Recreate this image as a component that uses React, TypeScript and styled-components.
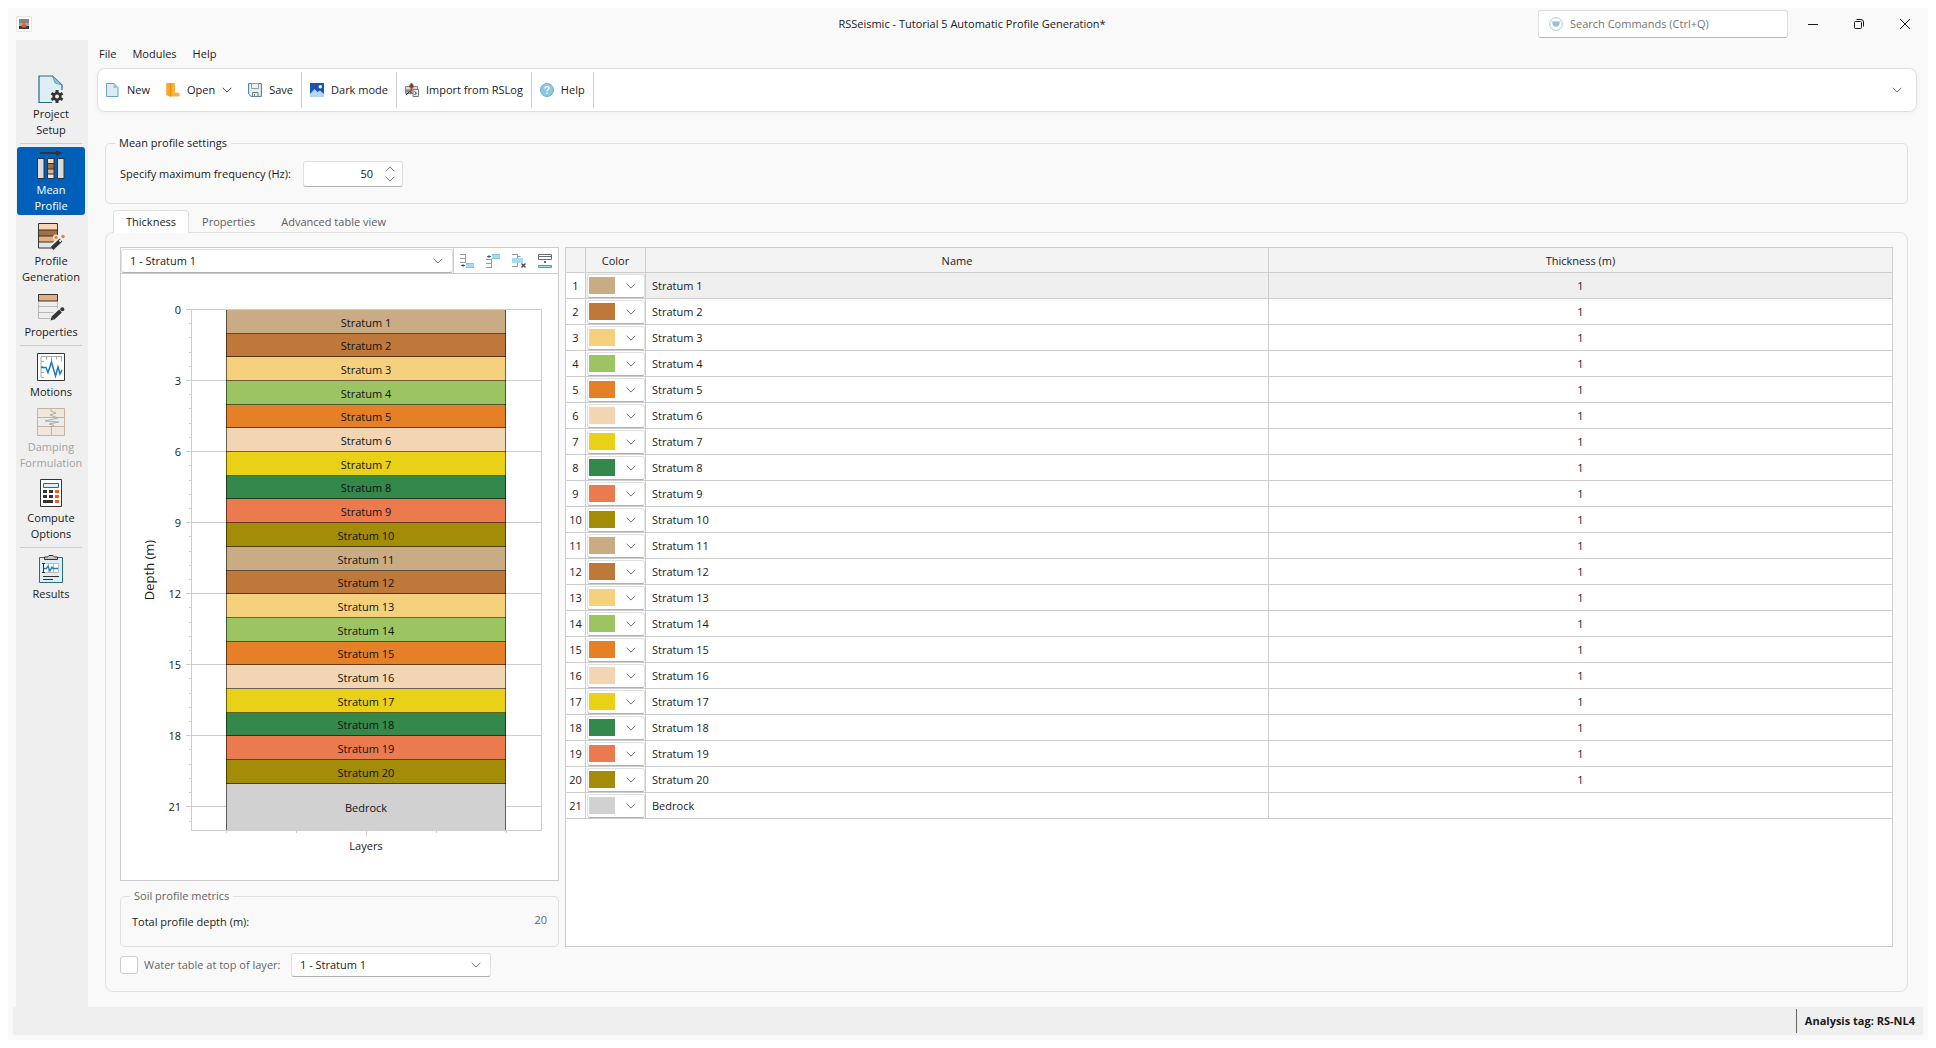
import React, { useState } from "react";
import styled, { createGlobalStyle, css } from "styled-components";

const font = `"Segoe UI", "Open Sans", "Noto Sans", sans-serif`;
const line = "#cdcdcd";
const softLine = "#e0e0e0";

const GlobalStyle = createGlobalStyle`
  *, *::before, *::after { box-sizing: border-box; }
  body { margin: 0; background: #fff; color: #1a1a1a; font: 11px/16px ${font}; }
  button, input, select { font: inherit; color: inherit; }
  button { margin: 0; padding: 0; border: 0; background: none; cursor: pointer; }
`;

/* ---------- window frame ---------- */

const Window = styled.div`
  display: flex;
  flex-direction: column;
  min-height: calc(100vh - 16px);
  margin: 8px;
  background: #f9f9f9;
`;

const TitleBar = styled.header`
  display: grid;
  grid-template-columns: 1fr auto 1fr;
  align-items: center;
  height: 32px;
  padding-left: 8px;
`;

const Title = styled.h1`
  margin: 0;
  font: inherit;
`;

const TitleTools = styled.div`
  display: flex;
  justify-content: flex-end;
  align-items: center;
`;

const SearchBox = styled.label`
  display: flex;
  align-items: center;
  gap: 7px;
  width: 250px;
  height: 28px;
  margin-right: 2px;
  padding: 0 10px;
  background: #fff;
  border: 1px solid ${softLine};
  border-bottom-color: #b8b8b8;
  border-radius: 3px;
  input {
    flex: 1;
    min-width: 0;
    padding: 0;
    border: 0;
    outline: 0;
    background: none;
  }
  input::placeholder { color: #757575; opacity: 1; }
`;

const WindowButton = styled.button`
  display: grid;
  place-items: center;
  width: 46px;
  height: 32px;
`;

const Body = styled.div`
  display: flex;
  flex: 1;
  padding-left: 8px;
`;

const StatusBar = styled.footer`
  display: flex;
  justify-content: flex-end;
  align-items: center;
  height: 28px;
  margin: 0 5px 5px;
  background: #efefef;
`;

const StatusTag = styled.strong`
  padding: 4px 8px 4px 8px;
  border-left: 1px solid #666;
`;

/* ---------- sidebar ---------- */

const Sidebar = styled.nav`
  display: flex;
  flex-direction: column;
  gap: 3px;
  flex: none;
  width: 72px;
  padding: 31px 3px 0 1px;
  background: #efefef;
`;

const NavButton = styled.button<{ $active?: boolean }>`
  display: flex;
  flex-direction: column;
  align-items: center;
  gap: 3px;
  padding: 4px 0 1px;
  border-radius: 3px;
  line-height: 16px;
  svg { display: block; }
  ${(p) => p.$active && css`background: #005fb8; color: #fff;`}
  &:disabled { color: #a3a3a3; cursor: default; }
`;

const NavLine = styled.hr`
  width: 62px;
  height: 1px;
  margin: 1px 3px 0;
  border: 0;
  background: ${line};
`;

/* ---------- main column ---------- */

const Main = styled.main`
  display: flex;
  flex-direction: column;
  flex: 1;
  min-width: 0;
`;

const MenuBar = styled.nav`
  display: flex;
  height: 28px;
  padding-left: 3px;
  button { padding: 0 8px; }
`;

const Toolbar = styled.div`
  display: flex;
  align-items: center;
  height: 44px;
  margin: 0 11px 0 9px;
  background: #fff;
  border: 1px solid ${softLine};
  border-radius: 8px;
  box-shadow: 0 1px 4px rgba(0, 0, 0, 0.05);
`;

const ToolGroup = styled.div`
  display: flex;
  align-items: center;
  height: 36px;
  border-right: 1px solid ${line};
`;

const ToolButton = styled.button`
  display: flex;
  align-items: center;
  gap: 7px;
  height: 100%;
  padding: 0 8px;
`;

const Overflow = styled.button`
  display: grid;
  margin: 0 14px 0 auto;
`;

const Content = styled.div`
  display: flex;
  flex-direction: column;
  flex: 1;
  padding: 23px 20px 15px 17px;
`;

const Group = styled.fieldset`
  min-width: 0;
  margin: 0;
  padding: 10px 9px 16px;
  border: 1px solid ${softLine};
  border-radius: 5px;
`;

const Legend = styled.legend<{ $muted?: boolean }>`
  padding: 0 4px;
  color: ${(p) => (p.$muted ? "#666" : "inherit")};
`;

const SettingRow = styled.div`
  display: flex;
  align-items: center;
  gap: 7px;
  padding-left: 5px;
  label { min-width: 176px; }
`;

const Spin = styled.div`
  display: flex;
  align-items: center;
  width: 100px;
  height: 26px;
  padding-right: 7px;
  background: #fff;
  border: 1px solid ${softLine};
  border-bottom-color: #b0b0b0;
  border-radius: 3px;
  input {
    flex: 1;
    min-width: 0;
    padding: 0 12px 0 4px;
    border: 0;
    outline: 0;
    background: none;
    text-align: right;
    appearance: textfield;
  }
  input::-webkit-inner-spin-button { appearance: none; margin: 0; }
`;

const SpinArrows = styled.div`
  display: flex;
  flex-direction: column;
  gap: 4px;
  button, svg { display: block; }
`;

const Tabs = styled.div`
  display: flex;
  margin-top: 6px;
  padding-left: 8px;
`;

const Tab = styled.button<{ $active: boolean }>`
  height: 23px;
  padding: 0 12px;
  border: 1px solid transparent;
  border-bottom: 0;
  border-radius: 4px 4px 0 0;
  color: #5f5f5f;
  ${(p) => p.$active && css`
    z-index: 1;
    background: #fff;
    border-color: ${softLine};
    color: #1a1a1a;
  `}
`;

const Panel = styled.section`
  display: grid;
  grid-template-columns: 439px minmax(0, 1fr);
  grid-template-rows: 1fr auto;
  gap: 6px;
  flex: 1;
  margin-top: -1px;
  padding: 14px;
  border: 1px solid ${softLine};
  border-radius: 8px;
`;

const LeftColumn = styled.div`
  display: flex;
  flex-direction: column;
  gap: 7px;
`;

const ChartBox = styled.div`
  display: flex;
  flex-direction: column;
  flex: 1;
  background: #fff;
  border: 1px solid ${line};
`;

const ChartTools = styled.div`
  display: flex;
  height: 26px;
  border-bottom: 1px solid ${line};
`;

const ChartToolButton = styled.button`
  display: grid;
  place-items: center;
  width: 26px;
`;

const ToolCluster = styled.div`
  display: flex;
  border-left: 1px solid ${line};
`;

const SelectShell = styled.span<{ $grow?: boolean }>`
  display: grid;
  align-items: center;
  align-self: flex-end;
  flex: ${(p) => (p.$grow ? 1 : "none")};
  width: ${(p) => (p.$grow ? "auto" : "200px")};
  height: 24px;
  select, svg { grid-area: 1 / 1; }
  select {
    width: 100%;
    height: 100%;
    padding: 0 30px 0 8px;
    appearance: none;
    outline: 0;
    background: #fff;
    border: 1px solid ${softLine};
    border-bottom-color: #b0b0b0;
    border-radius: 3px;
  }
  svg {
    justify-self: end;
    margin-right: 10px;
    pointer-events: none;
  }
`;

const Plot = styled.svg`
  flex: 1;
  width: 100%;
  font: 11px ${font};
  shape-rendering: crispEdges;
`;

const MetricRow = styled.div`
  display: flex;
  justify-content: space-between;
  align-items: flex-start;
  margin-top: -2px;
  padding: 0 2px;
  label { padding-top: 2px; }
  output { color: #666; }
`;

const WaterRow = styled.div`
  display: flex;
  align-items: center;
  gap: 6px;
  label { min-width: 141px; color: #666; }
`;

const Check = styled.input`
  width: 18px;
  height: 18px;
  margin: 0;
  appearance: none;
  background: #fff;
  border: 1px solid ${line};
  border-radius: 3px;
`;

/* ---------- table ---------- */

const TableBox = styled.div`
  background: #fff;
  border: 1px solid ${line};
`;

const Table = styled.table`
  width: 100%;
  table-layout: fixed;
  border-collapse: separate;
  border-spacing: 0;
  th, td {
    height: 26px;
    padding: 0;
    border-bottom: 1px solid ${line};
    border-right: 1px solid ${line};
    font-weight: normal;
  }
  th:last-child, td:last-child { border-right: 0; }
  thead th { height: 25px; padding-top: 1px; background: #f3f3f3; }
`;

const IndexCol = styled.col`width: 20px;`;
const ColorCol = styled.col`width: 60px;`;

const Row = styled.tr<{ $selected: boolean }>`
  td { background: ${(p) => (p.$selected ? "#efefef" : "#fff")}; }
  td:nth-child(3) { padding-left: 6px; }
  td:last-child { text-align: center; }
`;

const ColorButton = styled.button`
  display: flex;
  align-items: center;
  gap: 11px;
  width: 58px;
  height: 24px;
  margin-left: 1px;
  padding: 0 1px;
  background: #fff;
  border: 1px solid ${softLine};
  border-bottom-color: #b0b0b0;
  border-radius: 3px;
`;

const Swatch = styled.span<{ $color: string }>`
  width: 26px;
  height: 17px;
  background: ${(p) => p.$color};
`;

/* ---------- icons ---------- */

const Chevron = ({ up = false, color = "#767676" }: { up?: boolean; color?: string }) => (
  <svg width="10" height="6" viewBox="0 0 10 6" fill="none" stroke={color} aria-hidden="true">
    <path d={up ? "M.7 5.2 5 .9l4.3 4.3" : "M.7.8 5 5.1 9.3.8"} />
  </svg>
);

const Small = ({ children }: { children: React.ReactNode }) => (
  <svg width="14" height="14" viewBox="0 0 14 14" fill="none" aria-hidden="true">{children}</svg>
);

const Large = ({ children }: { children: React.ReactNode }) => (
  <svg width="28" height="28" viewBox="0 0 28 28" fill="none" aria-hidden="true">{children}</svg>
);

const AppIcon = () => (
  <svg width="16" height="16" viewBox="0 0 16 16" aria-hidden="true">
    <path d="M.5.5h15v15H.5z" fill="#fff" stroke="#e6e6e6" />
    <path d="M3 3h10v4H3z" fill="#858585" />
    <path d="M3 7h10v3H3z" fill="#a5a5a5" />
    <path d="M3 10h10v3H3z" fill="#3a3a3a" />
    <path d="M8 4v3M8 7l-2 4h4z" fill="#e8552a" stroke="#e8552a" />
  </svg>
);

const SearchIcon = () => (
  <Small>
    <circle cx="7" cy="7" r="6.4" fill="#fff" stroke="#a9cbd6" />
    <path d="M3.4 5h7.2v1.2c0 2-1.6 3.6-3.6 3.6S3.4 8.2 3.4 6.2z" fill="#9bbfcb" />
    <path d="M2.5 4.5h9" stroke="#c3dae2" />
  </Small>
);

const NewIcon = () => (
  <Small>
    <path d="M.5.5h7.500l4 4v9H.5z" fill="#dcebf2" stroke="#6ba3b8" />
    <path d="M7.500.5v4.500h4.500z" fill="#8cc8e0" />
  </Small>
);

const OpenIcon = () => (
  <Small>
    <path d="M.5 0H9v9.500l4.500.5v3.500H5L.5 12z" fill="#f9b03c" />
    <path d="M.5 0h4v14l-4-2z" fill="#ffa51f" />
    <path d="M4.800.5v13" stroke="#d98315" />
  </Small>
);

const SaveIcon = () => (
  <Small>
    <path d="M.6.600h12.800v12.800H3L.6 11z" fill="#e6eff3" stroke="#3e7f95" />
    <path d="M3.500.600h7v4.900h-7z" fill="#f3f3f3" stroke="#8a9da5" />
    <path d="M4.500 9.500h5.500v4H4.500z" fill="#e8e8e8" stroke="#6c7f87" />
    <path d="M6.500 11v2" stroke="#6c7f87" />
  </Small>
);

const DarkIcon = () => (
  <Small>
    <path d="M0 0h14v14H0z" fill="#1b55a8" />
    <path d="M0 11 4.500 6l3 3L10 7.500l4 3.500v3H0z" fill="#b9d4fb" />
    <circle cx="10.300" cy="3.800" r="1.700" fill="#fff" />
  </Small>
);

const ImportIcon = () => (
  <Small>
    <path d="M.5 3.500h12v7H.5z" fill="#ddd6d2" stroke="#8a8a8a" />
    <path d="M.5 6.500h6v3h-6z" fill="#8f8a87" />
    <path d="M1 12 4.500 8.500 7 10" stroke="#333" />
    <path d="M6.500 0v8" stroke="#b8432b" strokeWidth="2" />
    <path d="M4.500 1.500h4v3h-4z" fill="#6b3d33" />
    <path d="M8 6.500h5.500v7H8z" fill="#eee" stroke="#777" />
    <path d="m9.500 8.500 2 1.500-2 2" stroke="#333" />
  </Small>
);

const HelpIcon = () => (
  <Small>
    <circle cx="7" cy="7" r="6.500" fill="#8cc8e0" stroke="#6fadc6" />
    <path d="M5 5.500C5 4.300 5.800 3.600 7 3.600s2 .7 2 1.700c0 1.400-2 1.500-2 3M7 9.600v1.300" stroke="#fff" strokeWidth="1.300" />
  </Small>
);

const InsertBelowIcon = () => (
  <Small>
    <path d="M0 .5h5.500M0 4.500h5.500M0 8.500h5.500M5.500 0v9" stroke="#9a9a9a" />
    <path d="M6 9h8v5H6z" fill="#a3dcf3" />
    <path d="M6 9.500h8M6 13.500h8" stroke="#86c3dc" />
    <path d="M1.500 11.500H5" stroke="#555" />
    <path d="M1 11.500 3.500 10v3z" fill="#444" />
  </Small>
);

const InsertAboveIcon = () => (
  <Small>
    <path d="M0 5.500h5.500M0 9.500h5.500M0 13.500h5.500M5.500 5v9" stroke="#9a9a9a" />
    <path d="M6 0h8v5H6z" fill="#a3dcf3" />
    <path d="M6 .5h8M6 4.500h8" stroke="#86c3dc" />
    <path d="M1.500 2.500H5" stroke="#555" />
    <path d="M1 2.500 3.500 1v3z" fill="#444" />
  </Small>
);

const DeleteLayerIcon = () => (
  <Small>
    <path d="M0 .5h5.500M0 12.500h5.500M5.500 0v13M5.500 2.500h3" stroke="#9a9a9a" />
    <path d="M0 4h11v5H0z" fill="#a3dcf3" />
    <path d="m9.500 9.500 4 4M13.500 9.500l-4 4" stroke="#444" strokeWidth="1.300" />
  </Small>
);

const SplitLayerIcon = () => (
  <Small>
    <path d="M.5.5h13v5H.5zM.5 2.500h13" stroke="#6c6c6c" />
    <path d="M.5 11.500h13v2H.5z" fill="#a3dcf3" stroke="#4d9ab5" />
    <path d="M6 7h2v2H6z" fill="#666" />
  </Small>
);

const Gear = () => (
  <g>
    <circle cx="20" cy="21.500" r="7" fill="#efefef" />
    <path d="M20 15v13M14.400 18.300l11.200 6.500M14.400 24.800l11.200-6.500" stroke="#333" strokeWidth="3" />
    <circle cx="20" cy="21.500" r="4.500" fill="#333" />
    <circle cx="20" cy="21.500" r="2" fill="#efefef" />
  </g>
);

const ProjectIcon = () => (
  <Large>
    <path d="M2 1h14l9 9v18H2z" fill="#dfeef5" />
    <path d="M25 15v-5L15.500 1H2v26.500h13" stroke="#1f6f87" strokeWidth="1.200" />
    <path d="M15.500 1 25 10l-7-2z" fill="#8cc8e0" stroke="#4f96ae" strokeWidth=".8" />
    <Gear />
  </Large>
);

const MeanIcon = () => (
  <Large>
    <path d="M3 2h19" stroke="#333" strokeWidth="2" />
    <path d="M19-1 25 2l-6 3z" fill="#333" />
    <path d="M.5 7.500H7v20H.5zM20.500 7.500H27v20h-6.500z" fill="#dcdcdc" stroke="#333" />
    <path d="M10.500 7.500H17V12h-6.500z" fill="#fbd9b5" />
    <path d="M10.500 12.500H17V18h-6.500z" fill="#a3713f" />
    <path d="M10.500 18H17v5h-6.500z" fill="#e0b080" />
    <path d="M10.500 23H17v4.500h-6.500z" fill="#e8e8e8" />
    <path d="M10.500 7.500H17v20h-6.500zM10.500 12.500H17M10.500 18H17M10.500 23H17" stroke="#333" />
  </Large>
);

const GenerationIcon = () => (
  <Large>
    <path d="M1.500 1.500h19V8h-19z" fill="#f8d8b8" />
    <path d="M1.500 8h19v6h-19z" fill="#a3713f" />
    <path d="M1.500 14h19v6h-19z" fill="#e0b080" />
    <path d="M1.500 20h13v6h-13z" fill="#e4e4e4" />
    <path d="M20.500 14V1.500h-19V26H15M1.500 8h19M1.500 14h19M1.500 20H17" stroke="#333" />
    <path d="m15 26.500 9-9" stroke="#efefef" strokeWidth="7" />
    <circle cx="19" cy="15.500" r="3" fill="#efefef" />
    <circle cx="26" cy="14.500" r="3" fill="#efefef" />
    <path d="m15 26.500 9-8.500" stroke="#333" strokeWidth="4" />
    <path d="m22.500 19.500 1.500-1.500" stroke="#eee" strokeWidth="2" />
    <circle cx="19" cy="15.500" r="1.700" fill="#f0794e" />
    <circle cx="26" cy="14.500" r="1.700" fill="#f0794e" />
  </Large>
);

const PropertiesIcon = () => (
  <Large>
    <path d="M1.500 8v17.500h14M20.500 8v9M1.500 13.500h19M1.500 19.500h17" stroke="#b9b9b9" />
    <path d="M1.500 1.500h19V8h-19z" fill="#e0b080" stroke="#333" />
    <path d="m14.500 26.500 11-11" stroke="#efefef" strokeWidth="7" />
    <path d="m16 25 7.500-7" stroke="#333" strokeWidth="4" />
    <path d="m13.500 27.500 1.200-4 2.800 2.800z" fill="#333" />
    <circle cx="25.300" cy="16.300" r="2" fill="#333" />
  </Large>
);

const MotionsIcon = () => (
  <Large>
    <path d="M.5.5h27v27H.5z" fill="#fff" stroke="#333" />
    <path d="M4 24.500V3.500h21M4 8.500h3M4 13.500h2M4 19.500h3M4 24.500h3M9.500 3.500v3M14.500 3.500v5M19.500 3.500v3M24.500 3.500v5" stroke="#aaa" />
    <path d="M4 14.500h5l2 5L14.500 9l4 14 2.500-9 2 7 2-4" stroke="#1a7bbf" strokeWidth="1.500" />
  </Large>
);

const DampingIcon = () => (
  <Large>
    <path d="M.5.5h27v27H.5z" fill="#efe6dc" stroke="#c4b4a6" />
    <path d="M1 10h26v8.500H1z" fill="#ececec" />
    <path d="M.5 9.500h27M.5 18.500h27M14.500 18.500v9" stroke="#c4b4a6" />
    <path d="M14 1v2l5 2-6 2 8 3-13 3 14 1-10 2 5 1.500-4 1.500" stroke="#adadad" />
  </Large>
);

const ComputeIcon = () => (
  <Large>
    <path d="M3.500.5h21v27h-21z" fill="#fff" stroke="#333" />
    <path d="M6.500 4.500h15v4h-15z" fill="#dfeef5" stroke="#1f6f87" />
    <path d="M6 11h4v3H6zM12 11h4v3h-4zM6 16h4v3H6zM12 16h4v3h-4zM6 21h10v3H6z" fill="#333" />
    <path d="M18 11h4v3h-4zM18 16h4v3h-4zM18 21h4v3h-4z" fill="#f15a24" />
  </Large>
);

const ResultsIcon = () => (
  <Large>
    <path d="M2.500 2.500h23v25h-23z" fill="#dfeef5" stroke="#1f6f87" />
    <path d="M7.500 4.500V2h3L12 .5h4L17.500 2h3v2.500z" fill="#c8c8c8" stroke="#333" />
    <path d="M6.500 8.500h15v9h-15zM11.500 8.500v9M16.500 8.500v9" fill="#fff" stroke="#bbb" />
    <path d="M6.500 8v10M5 8.500h3M5 17.500h3" stroke="#333" />
    <path d="M7 13.500h2.500L11 11l2 5 2-4 1 1.500h5" stroke="#1a7bbf" strokeWidth="1.300" />
    <path d="M6 21.500h16M6 24.500h10" stroke="#333" />
  </Large>
);

/* ---------- data ---------- */

const palette = ["#c9ac83", "#be7839", "#f6d17d", "#9cc462", "#e68026", "#f2d5b3", "#e8d117", "#35884b", "#eb7a4f", "#a38c08"];

type Layer = { name: string; color: string; thickness?: number };

const layers: Layer[] = [
  ...Array.from({ length: 20 }, (_, i) => ({
    name: `Stratum ${i + 1}`,
    color: palette[i % palette.length],
    thickness: 1,
  })),
  { name: "Bedrock", color: "#d1d1d1" },
];

const totalDepth = layers.reduce((sum, l) => sum + (l.thickness ?? 0), 0);
const layerOptions = layers.slice(0, -1).map((l, i) => `${i + 1} - ${l.name}`);

type NavItem = { label: string[]; icon: React.ReactNode; state?: "active" | "disabled"; lineAfter?: boolean };

const navItems: NavItem[] = [
  { label: ["Project", "Setup"], icon: <ProjectIcon />, lineAfter: true },
  { label: ["Mean", "Profile"], icon: <MeanIcon />, state: "active" },
  { label: ["Profile", "Generation"], icon: <GenerationIcon /> },
  { label: ["Properties"], icon: <PropertiesIcon />, lineAfter: true },
  { label: ["Motions"], icon: <MotionsIcon /> },
  { label: ["Damping", "Formulation"], icon: <DampingIcon />, state: "disabled" },
  { label: ["Compute", "Options"], icon: <ComputeIcon />, lineAfter: true },
  { label: ["Results"], icon: <ResultsIcon /> },
];

/* ---------- profile chart ---------- */

const plot = { left: 70, right: 420, top: 35, bottom: 556 };
const bedrockDepth = 2;
const depthRange = totalDepth + bedrockDepth;
const toY = (depth: number) => Math.round(plot.top + (depth * (plot.bottom - plot.top)) / depthRange) + 0.5;

function ProfileChart() {
  const barX = plot.left + 35;
  const barWidth = plot.right - plot.left - 70;
  const center = (plot.left + plot.right) / 2;
  const majors = Array.from({ length: 8 }, (_, i) => i * 3);
  const minors = Array.from({ length: 37 }, (_, i) => i * 0.6).filter((d) => d <= depthRange);
  return (
    <Plot viewBox="0 0 437 606" role="img" aria-label="Soil layers by depth">
      <rect x={plot.left + 0.5} y={toY(0)} width={plot.right - plot.left} height={plot.bottom - plot.top} fill="#fff" stroke={line} />
      {minors.map((d) => (
        <path key={d} d={`M${plot.left - 2} ${toY(d)}h3`} stroke={line} />
      ))}
      {majors.map((d) => (
        <g key={d}>
          <path d={`M${plot.left - 5} ${toY(d)}H${plot.right}`} stroke={line} />
          <text x={plot.left - 10} y={toY(d) + 4} textAnchor="end" fill="#1a1a1a">{d}</text>
        </g>
      ))}
      {[0, 1, 2, 3, 4].map((i) => (
        <path key={i} d={`M${barX + (i * barWidth) / 4 + 0.5} ${plot.bottom}v${i === 2 ? 6 : 3}`} stroke={line} />
      ))}
      {layers.map((layer, i) => {
        const y0 = toY(i);
        const y1 = toY(layer.thickness ? i + 1 : depthRange);
        return (
          <g key={layer.name}>
            <rect x={barX} y={y0} width={barWidth} height={y1 - y0} fill={layer.color} />
            <path
              d={`M${barX + 0.5} ${y0}V${y1}M${barX + barWidth - 0.5} ${y0}V${y1}${i > 0 ? `M${barX} ${y0}h${barWidth}` : ""}`}
              stroke="#000"
              strokeOpacity="0.55"
            />
            <text x={center} y={Math.round((y0 + y1) / 2) + 5} textAnchor="middle" fill="#111">{layer.name}</text>
          </g>
        );
      })}
      <path d={`M${plot.left} ${toY(0)}H${plot.right}M${plot.left} ${toY(depthRange)}H${plot.right}`} stroke={line} />
      <text x={center} y={576} textAnchor="middle" fill="#1a1a1a">Layers</text>
      <text transform="translate(33 296) rotate(-90)" textAnchor="middle" fontSize="13" fill="#1a1a1a">Depth (m)</text>
    </Plot>
  );
}

/* ---------- app ---------- */

const tabNames = ["Thickness", "Properties", "Advanced table view"];

export default function App() {
  const [tab, setTab] = useState(tabNames[0]);
  const [selected, setSelected] = useState(0);
  const [frequency, setFrequency] = useState(50);

  return (
    <>
      <GlobalStyle />
      <Window>
        <TitleBar>
          <AppIcon />
          <Title>RSSeismic - Tutorial 5 Automatic Profile Generation*</Title>
          <TitleTools>
            <SearchBox>
              <SearchIcon />
              <input type="text" aria-label="Search commands" placeholder="Search Commands (Ctrl+Q)" />
            </SearchBox>
            <WindowButton aria-label="Minimize">
              <svg width="10" height="10" stroke="#1a1a1a"><path d="M0 5.500h10" /></svg>
            </WindowButton>
            <WindowButton aria-label="Restore">
              <svg width="10" height="10" fill="none" stroke="#1a1a1a">
                <rect x=".5" y="2.500" width="7" height="7" rx="1" />
                <path d="M2.500.5H7A2.500 2.500 0 0 1 9.500 3v4.500" />
              </svg>
            </WindowButton>
            <WindowButton aria-label="Close">
              <svg width="10" height="10" stroke="#1a1a1a"><path d="m0 0 10 10M10 0 0 10" /></svg>
            </WindowButton>
          </TitleTools>
        </TitleBar>

        <Body>
          <Sidebar aria-label="Workflow">
            {navItems.map((item) => (
              <React.Fragment key={item.label.join(" ")}>
                <NavButton $active={item.state === "active"} disabled={item.state === "disabled"}>
                  {item.icon}
                  <span>
                    {item.label.map((word, i) => (
                      <React.Fragment key={word}>
                        {i > 0 && <br />}
                        {word}
                      </React.Fragment>
                    ))}
                  </span>
                </NavButton>
                {item.lineAfter && <NavLine />}
              </React.Fragment>
            ))}
          </Sidebar>

          <Main>
            <MenuBar aria-label="Menu">
              <button>File</button>
              <button>Modules</button>
              <button>Help</button>
            </MenuBar>

            <Toolbar role="toolbar" aria-label="Main toolbar">
              <ToolGroup>
                <ToolButton><NewIcon />New</ToolButton>
                <ToolButton><OpenIcon />Open <Chevron color="#444" /></ToolButton>
                <ToolButton><SaveIcon />Save</ToolButton>
              </ToolGroup>
              <ToolGroup><ToolButton><DarkIcon />Dark mode</ToolButton></ToolGroup>
              <ToolGroup><ToolButton><ImportIcon />Import from RSLog</ToolButton></ToolGroup>
              <ToolGroup><ToolButton><HelpIcon />Help</ToolButton></ToolGroup>
              <Overflow aria-label="More tools"><Chevron /></Overflow>
            </Toolbar>

            <Content>
              <Group>
                <Legend>Mean profile settings</Legend>
                <SettingRow>
                  <label htmlFor="frequency">Specify maximum frequency (Hz):</label>
                  <Spin>
                    <input id="frequency" type="number" value={frequency} onChange={(e) => setFrequency(Number(e.target.value))} />
                    <SpinArrows>
                      <button aria-label="Increase" onClick={() => setFrequency(frequency + 1)}><Chevron up /></button>
                      <button aria-label="Decrease" onClick={() => setFrequency(frequency - 1)}><Chevron /></button>
                    </SpinArrows>
                  </Spin>
                </SettingRow>
              </Group>

              <Tabs role="tablist">
                {tabNames.map((name) => (
                  <Tab key={name} role="tab" aria-selected={tab === name} $active={tab === name} onClick={() => setTab(name)}>
                    {name}
                  </Tab>
                ))}
              </Tabs>

              <Panel role="tabpanel">
                <LeftColumn>
                  <ChartBox>
                    <ChartTools>
                      <SelectShell $grow>
                        <select aria-label="Selected layer" value={layerOptions[selected] ?? layerOptions[0]} onChange={(e) => setSelected(e.target.selectedIndex)}>
                          {layerOptions.map((o) => <option key={o}>{o}</option>)}
                        </select>
                        <Chevron />
                      </SelectShell>
                      <ToolCluster>
                        <ChartToolButton aria-label="Insert layer below"><InsertBelowIcon /></ChartToolButton>
                        <ChartToolButton aria-label="Insert layer above"><InsertAboveIcon /></ChartToolButton>
                        <ChartToolButton aria-label="Delete layer"><DeleteLayerIcon /></ChartToolButton>
                        <ChartToolButton aria-label="Split layer"><SplitLayerIcon /></ChartToolButton>
                      </ToolCluster>
                    </ChartTools>
                    <ProfileChart />
                  </ChartBox>
                  <Group>
                    <Legend $muted>Soil profile metrics</Legend>
                    <MetricRow>
                      <label htmlFor="depth">Total profile depth (m):</label>
                      <output id="depth">{totalDepth}</output>
                    </MetricRow>
                  </Group>
                </LeftColumn>

                <TableBox>
                  <Table>
                    <colgroup><IndexCol /><ColorCol /><col /><col /></colgroup>
                    <thead>
                      <tr><th aria-label="Row" /><th>Color</th><th>Name</th><th>Thickness (m)</th></tr>
                    </thead>
                    <tbody>
                      {layers.map((layer, i) => (
                        <Row key={layer.name} $selected={i === selected} onClick={() => setSelected(i)}>
                          <th scope="row">{i + 1}</th>
                          <td>
                            <ColorButton aria-haspopup="listbox" aria-label={`Color of ${layer.name}`}>
                              <Swatch $color={layer.color} />
                              <Chevron />
                            </ColorButton>
                          </td>
                          <td>{layer.name}</td>
                          <td>{layer.thickness}</td>
                        </Row>
                      ))}
                    </tbody>
                  </Table>
                </TableBox>

                <WaterRow>
                  <Check type="checkbox" id="water" />
                  <label htmlFor="water">Water table at top of layer:</label>
                  <SelectShell>
                    <select aria-label="Water table layer">
                      {layerOptions.map((o) => <option key={o}>{o}</option>)}
                    </select>
                    <Chevron />
                  </SelectShell>
                </WaterRow>
              </Panel>
            </Content>
          </Main>
        </Body>

        <StatusBar><StatusTag>Analysis tag: RS-NL4</StatusTag></StatusBar>
      </Window>
    </>
  );
}
